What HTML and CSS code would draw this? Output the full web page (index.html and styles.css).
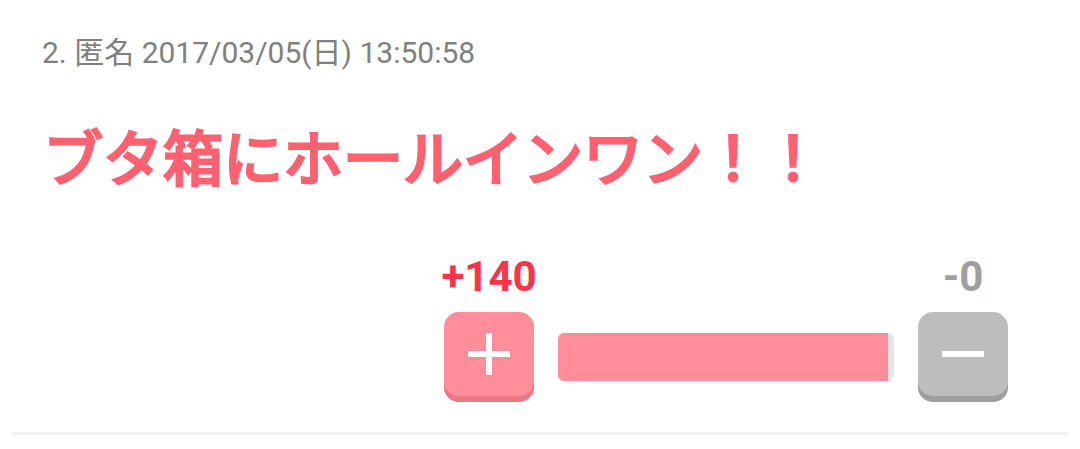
FILE: index.html
```html
<!DOCTYPE html>
<html lang="ja">
<head>
<meta charset="utf-8">
<meta name="viewport" content="width=device-width">
<title>コメント</title>
<link rel="stylesheet" href="styles.css">
</head>
<body>
<article class="comment">
  <header class="meta">2. 匿名 2017/03/05(日) 13:50:58</header>
  <p class="body">ブタ箱にホールインワン！！</p>
  <div class="votes">
    <div class="vote plus">
      <span class="count">+140</span>
      <button class="button" type="button" aria-label="プラス">
        <svg class="icon" viewBox="0 0 42 42" aria-hidden="true"><path d="M0 21H42M21 0V42"/></svg>
      </button>
    </div>
    <div class="bar"><div class="fill" style="width:98.2%"></div></div>
    <div class="vote minus">
      <span class="count">-0</span>
      <button class="button" type="button" aria-label="マイナス">
        <svg class="icon" viewBox="0 0 42 42" aria-hidden="true"><path d="M0 21H42"/></svg>
      </button>
    </div>
  </div>
</article>
</body>
</html>
```
FILE: styles.css
```css
* { box-sizing: border-box; }
body {
  margin: 0;
  background: #fff;
  font-family: Roboto, "Noto Sans CJK JP", sans-serif;
}
.comment {
  margin: 0 12px;
  padding: 31px 60px 30px 30px;
  border-bottom: 3px solid #f0f0f0;
}
.meta {
  font-size: 30px;
  line-height: 44px;
  color: #808080;
}
.body {
  margin: 41px 0 0;
  padding-left: 1px;
  font-size: 60px;
  line-height: 90px;
  font-weight: 400;
  -webkit-text-stroke: 3px #ff6171;
  color: #ff6171;
}
.votes {
  display: flex;
  justify-content: flex-end;
  align-items: flex-end;
  gap: 24px;
  margin-top: 46px;
}
.vote {
  display: flex;
  flex-direction: column;
  align-items: center;
  gap: 10px;
  width: 90px;
}
.count {
  font-size: 42px;
  line-height: 50px;
  font-weight: 700;
  white-space: nowrap;
}
.button {
  display: flex;
  align-items: center;
  justify-content: center;
  width: 90px;
  height: 90px;
  padding: 0 0 6px;
  border: 0;
  border-radius: 15px;
}
.icon {
  width: 42px;
  height: 42px;
  fill: none;
  stroke: #fff;
  stroke-width: 6;
}
.plus .count { color: #ff3347; }
.plus .button { background: #ff8e9a; box-shadow: inset 0 -6px #ea7885; }
.minus .count { color: #9e9e9e; }
.minus .button { background: #bdbdbd; box-shadow: inset 0 -6px #9e9e9e; }
.bar {
  width: 336px;
  height: 48px;
  margin-bottom: 21px;
  border-radius: 6px;
  overflow: hidden;
  background: #e5e5e5;
}
.fill {
  height: 100%;
  background: #ff8e9a;
}
```
